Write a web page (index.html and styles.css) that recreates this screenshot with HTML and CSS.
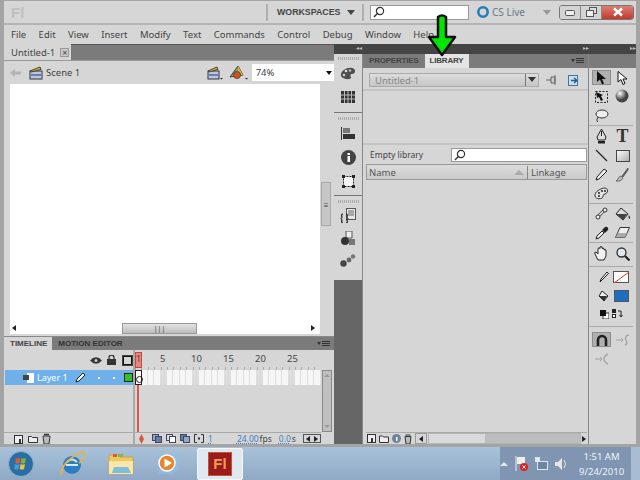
FILE: index.html
```html
<!DOCTYPE html>
<html lang="en">
<head>
  <meta charset="UTF-8">
  <title>Adobe Flash Professional</title>
  <link rel="stylesheet" href="styles.css">
</head>
<body>
  <div class="window">
    <div class="titlebar">
      <span class="logo">Fl</span>
      <span class="title-sep"></span>
      <span class="workspaces">WORKSPACES</span>
      <span class="caret"></span>
      <span class="title-sep"></span>
      <div class="search top-search">
        <svg width="12" height="12" viewBox="0 0 12 12"><circle cx="7" cy="5" r="3.6" fill="none" stroke="#333" stroke-width="1.2"/><path d="M4.3 7.6 1 11" stroke="#333" stroke-width="1.4"/></svg>
      </div>
      <svg class="cs-icon" width="14" height="14" viewBox="0 0 14 14"><circle cx="7" cy="7" r="4.7" fill="none" stroke="#1f7fb8" stroke-width="2.6"/></svg>
      <span class="cs-live">CS Live</span>
      <span class="caret light"></span>
      <div class="win-btns">
        <span class="win-btn"><svg width="10" height="7" viewBox="0 0 10 7"><rect x=".5" y="1.5" width="9" height="5" rx="1" fill="#eee" stroke="#555"/></svg></span>
        <span class="win-btn"><svg width="11" height="10" viewBox="0 0 11 10"><rect x="3.5" y=".5" width="7" height="6" fill="#ddd" stroke="#555"/><rect x=".5" y="3.5" width="7" height="6" fill="#eee" stroke="#555"/></svg></span>
        <span class="win-btn close"><svg width="12" height="10" viewBox="0 0 12 10"><path d="M2 1.5 10 8.5M10 1.5 2 8.5" stroke="#fff" stroke-width="2.4"/></svg></span>
      </div>
    </div>

    <div class="menubar">
      <span>File</span><span>Edit</span><span>View</span><span>Insert</span><span>Modify</span><span>Text</span><span>Commands</span><span>Control</span><span>Debug</span><span>Window</span><span>Help</span>
    </div>

    <div class="workspace">
      <div class="left-col">
        <div class="doc-tabs">
          <div class="doc-tab">Untitled-1 <span class="tab-close">×</span></div>
        </div>
        <div class="scene-bar">
          <svg width="13" height="10" viewBox="0 0 13 10"><path d="M1 5 6 1v2.5h6v3H6V9z" fill="#b4b4b4"/></svg>
          <svg class="clap" width="14" height="14" viewBox="0 0 14 14"><rect x="1" y="5" width="12" height="8" fill="#bcc6dc" stroke="#334"/><rect x="1" y="8" width="12" height="2" fill="#6a7fb0"/><path d="M1 5 11 1l1 2.5L2 6z" fill="#d8b13a" stroke="#443"/></svg>
          <span class="scene-name">Scene 1</span>
          <svg class="clap right" width="16" height="14" viewBox="0 0 16 14"><rect x="1" y="5" width="11" height="8" fill="#bcc6dc" stroke="#334"/><rect x="1" y="8" width="11" height="2" fill="#6a7fb0"/><path d="M1 5 10 1l1 2.5L2 6z" fill="#d8b13a" stroke="#443"/><path d="M13 12h3l-1.5 1.5z" fill="#222"/></svg>
          <svg class="symbol" width="20" height="15" viewBox="0 0 20 15"><path d="M1 12 9 1l5 9z" fill="#6eaa55" stroke="#444"/><path d="M9 1l5 9H9z" fill="#d9b13b"/><circle cx="8" cy="10" r="3.5" fill="#d2521f" stroke="#644"/><path d="M16 13h3l-1.5 1.5z" fill="#222"/></svg>
          <div class="zoom-box">74%<span class="zoom-caret"></span></div>
        </div>
        <div class="stage-area">
          <div class="stage"></div>
          <div class="v-scroll"><span class="v-thumb">≡</span></div>
        </div>
        <div class="h-scroll">
          <span class="arrow-l"></span>
          <span class="h-thumb">|||</span>
          <span class="arrow-r"></span>
        </div>
        <div class="timeline">
          <div class="tl-tabs">
            <span class="tl-tab active">TIMELINE</span>
            <span class="tl-tab">MOTION EDITOR</span>
            <span class="panel-menu"></span>
          </div>
          <div class="tl-main">
            <div class="layers">
              <div class="layer-head">
                <svg class="eye" width="12" height="9" viewBox="0 0 12 9"><path d="M0 4.5Q6-2 12 4.5 6 11 0 4.5z" fill="#333"/><circle cx="6" cy="4.5" r="1.5" fill="#ccc"/></svg>
                <svg width="9" height="10" viewBox="0 0 9 10"><rect y="4" width="9" height="6" fill="#333"/><path d="M2 4V2.500a2.500 2.500 0 0 1 5 0V4" fill="none" stroke="#333" stroke-width="1.3"/></svg>
                <span class="outline-box"></span>
              </div>
              <div class="layer-row">
                <svg class="layer-icon" width="11" height="10" viewBox="0 0 11 10"><path d="M0 2h4V0h7v10H4V7H0z" fill="#fff"/><path d="M0 2h6v5H0z" fill="#444"/></svg>
                <span class="layer-name">Layer 1</span>
                <svg class="pencil" width="11" height="11" viewBox="0 0 11 11"><path d="M1 10l1-3 6-6 2 2-6 6z" fill="#fff" stroke="#222"/></svg>
                <i class="dot"></i><i class="dot"></i>
                <span class="layer-color"></span>
              </div>
              <div class="layer-empty"></div>
              <div class="tl-tools">
                <svg width="10" height="10" viewBox="0 0 10 10"><rect x=".5" y="1.5" width="8" height="8" fill="#eee" stroke="#333"/><path d="M5 5h2v4H5z" fill="#333"/></svg>
                <svg width="10" height="10" viewBox="0 0 10 10"><path d="M.5 2.500h3l1 1h5v5h-9z" fill="#eee" stroke="#333"/></svg>
                <svg width="9" height="11" viewBox="0 0 9 11"><path d="M1 3h7l-1 8H2z" fill="#bbb" stroke="#333"/><path d="M2 1.5h5" stroke="#333" stroke-width="1.5"/></svg>
              </div>
            </div>
            <div class="frames">
              <div class="ruler">
                <span class="ph-head">1</span>
                <span class="rn n5">5</span><span class="rn n10">10</span><span class="rn n15">15</span><span class="rn n20">20</span><span class="rn n25">25</span>
              </div>
              <div class="frame-row">
                <span class="keyframe"></span>
              </div>
              <div class="frame-empty"></div>
              <div class="frame-status">
                <svg class="fs-first" width="5" height="10" viewBox="0 0 5 10"><path d="M2.5 0 5 5 2.500 10 0 5z" fill="#d8593f"/></svg>
                <svg width="10" height="9" viewBox="0 0 10 9"><rect x=".5" y=".5" width="6" height="6" fill="#8fa9c9" stroke="#446"/><rect x="3.5" y="2.5" width="6" height="6" fill="#667d9c" stroke="#446"/></svg>
                <svg width="10" height="9" viewBox="0 0 10 9"><rect x=".5" y=".5" width="6" height="6" fill="#ddd" stroke="#446"/><rect x="3.5" y="2.5" width="6" height="6" fill="#fff" stroke="#446"/></svg>
                <svg width="10" height="9" viewBox="0 0 10 9"><rect x=".5" y=".5" width="6" height="6" fill="#667d9c" stroke="#446"/><rect x="3.5" y="2.5" width="6" height="6" fill="#8fa9c9" stroke="#446"/></svg>
                <svg width="10" height="9" viewBox="0 0 10 9"><path d="M3 .5H.5v8H3M7 .5h2.500v8H7" fill="none" stroke="#333"/><rect x="4" y="3.5" width="2" height="2" fill="#333"/></svg>
                <span class="link first-num">1</span>
                <span class="link fps">24.00</span><span class="unit">fps</span>
                <span class="link secs">0.0</span><span class="unit">s</span>
                <span class="tl-scroll"><span class="arrow-l"></span><span class="arrow-r"></span></span>
              </div>
            </div>
            <div class="tl-vscroll"><span class="up"></span><span class="down"></span></div>
          </div>
        </div>
      </div>

      <div class="right-side">
        <div class="collapse-bar">
          <span class="chev">◂◂</span><span class="chev c2">▸▸</span><span class="chev c3">▸▸</span>
        </div>
        <div class="dock-row">
          <div class="dock">
            <div class="dock-group">
              <span class="grip"></span>
              <svg width="16" height="14" viewBox="0 0 16 14"><path d="M1 9C0 4 7 0 12 1c5 1 3 6 0 6-2 0-2 2-1 3 1 3-8 3-10-1z" fill="#4d4d4d"/><circle cx="6" cy="4" r="1.3" fill="#ddd"/><circle cx="10" cy="3.5" r="1.3" fill="#bbb"/><circle cx="4" cy="8" r="1.3" fill="#ccc"/></svg>
              <svg width="14" height="12" viewBox="0 0 14 12"><rect width="14" height="12" fill="#333"/><path d="M0 4h14M0 8h14M3.500 0v12M7 0v12M10.500 0v12" stroke="#bbb"/></svg>
            </div>
            <div class="dock-group">
              <span class="grip"></span>
              <svg width="14" height="13" viewBox="0 0 14 13"><path d="M.5 0v13" stroke="#333"/><rect x="2" y="1" width="7" height="5" fill="#777"/><rect x="2" y="7" width="12" height="5" fill="#333"/></svg>
              <svg width="15" height="15" viewBox="0 0 15 15"><circle cx="7.5" cy="7.5" r="7.5" fill="#444"/><rect x="6.5" y="6" width="2.5" height="6" fill="#fff"/><rect x="6.5" y="3" width="2.5" height="2" fill="#fff"/></svg>
              <svg width="13" height="13" viewBox="0 0 13 13"><rect x="1.5" y="1.5" width="10" height="10" fill="#f4f4f4" stroke="#222" stroke-dasharray="2 1"/><path d="M0 0h3v3H0zM10 0h3v3h-3zM0 10h3v3H0zM10 10h3v3h-3z" fill="#222"/></svg>
            </div>
            <div class="dock-group last">
              <span class="grip"></span>
              <svg width="16" height="15" viewBox="0 0 16 15"><rect x="6.5" y=".5" width="9" height="11" fill="#e8e8e8" stroke="#555"/><path d="M8 3h6M8 5h6M8 7h6" stroke="#666"/><path d="M3 6Q1 6 2 9 2 10.500 .5 10.500 2 10.500 2 12q-1 3 1 3M6 6q2 0 1 3 0 1.500 1.500 1.500Q7 10.500 7 12q1 3-1 3" fill="none" stroke="#222" stroke-width="1.2"/></svg>
              <svg width="16" height="15" viewBox="0 0 16 15"><path d="M6 0h6v7H6z" fill="#eee" stroke="#555"/><circle cx="5" cy="10" r="4" fill="#333"/><rect x="9" y="8" width="6" height="6" fill="#777"/></svg>
              <svg width="16" height="13" viewBox="0 0 16 13"><circle cx="3.5" cy="9.5" r="3.2" fill="#444"/><circle cx="9" cy="6" r="2.4" fill="#666"/><circle cx="13" cy="2.5" r="2.2" fill="#777"/></svg>
            </div>
            <div class="dock-foot"></div>
          </div>

          <div class="library">
            <div class="lib-tabs">
              <span class="lib-tab">PROPERTIES</span>
              <span class="lib-tab active">LIBRARY</span>
              <span class="panel-menu"></span>
            </div>
            <div class="lib-head">
              <div class="doc-select">
                <span>Untitled-1</span>
                <span class="select-btn"></span>
              </div>
              <svg class="pin-icon" width="12" height="10" viewBox="0 0 12 10"><path d="M0 5h5M5 2h4v6H5zM9 0v10" stroke="#666" fill="#ccc"/></svg>
              <svg class="new-lib-icon" width="12" height="11" viewBox="0 0 12 11"><rect x=".5" y=".5" width="9" height="10" fill="#cfdce8" stroke="#3f78a6"/><path d="M3 5.500h5M6 3l3 2.500L6 8" stroke="#1f5f96" fill="none" stroke-width="1.3"/></svg>
            </div>
            <div class="lib-preview"></div>
            <div class="lib-search-row">
              <span class="empty-label">Empty library</span>
              <div class="search lib-search">
                <svg width="12" height="12" viewBox="0 0 12 12"><circle cx="7" cy="5" r="3.6" fill="none" stroke="#333" stroke-width="1.2"/><path d="M4.3 7.6 1 11" stroke="#333" stroke-width="1.4"/></svg>
              </div>
            </div>
            <div class="lib-list">
              <div class="lib-cols">
                <span class="col-name">Name</span>
                <span class="sort-tri"></span>
                <span class="col-link">Linkage</span>
              </div>
              <div class="lib-rows"></div>
              <div class="lib-foot">
                <svg width="9" height="9" viewBox="0 0 9 9"><rect x=".5" y=".5" width="8" height="8" fill="#eee" stroke="#333"/><rect x="4" y="4" width="2" height="4" fill="#333"/></svg>
                <svg width="10" height="8" viewBox="0 0 10 8"><path d="M.5 1h3l1 1h5v5.500h-9z" fill="#eee" stroke="#333"/></svg>
                <svg width="9" height="9" viewBox="0 0 9 9"><circle cx="4.5" cy="4.5" r="4.5" fill="#6d84a0"/><rect x="4" y="3" width="1.5" height="4" fill="#fff"/></svg>
                <svg width="8" height="10" viewBox="0 0 8 10"><path d="M1 2.500h6L6 10H2z" fill="#bbb" stroke="#333"/><path d="M1.500 1h5" stroke="#333"/></svg>
                <span class="lib-scroll"><span class="arrow-box"><span class="arrow-l"></span></span><span class="track"><span class="track-thumb"></span></span><span class="arrow-r"></span></span>
              </div>
            </div>
          </div>

          <div class="tools">
            <div class="tools-top"></div>
            <div class="tool-group select-tools">
              <span class="tool on"><svg width="11" height="14" viewBox="0 0 11 14"><path d="M1 0v11l3-2.500 2 5 2-1-2-4.500h4z" fill="#111"/></svg></span>
              <span class="tool"><svg width="11" height="14" viewBox="0 0 11 14"><path d="M1 .5v10.500l3-2.500 2 5 2-1-2-4.500h4z" fill="#fff" stroke="#111"/></svg></span>
              <span class="tool"><svg width="15" height="14" viewBox="0 0 15 14"><rect x="1.5" y="1.5" width="12" height="11" fill="none" stroke="#222" stroke-dasharray="2 1.5"/><path d="M2 2l7 3-2 1 2 4-2 1-2-4-2 1z" fill="#111"/></svg></span>
              <span class="tool"><svg width="15" height="15" viewBox="0 0 15 15"><defs><radialGradient id="ball" cx=".35" cy=".3"><stop offset="0" stop-color="#fff"/><stop offset="1" stop-color="#444"/></radialGradient></defs><circle cx="7" cy="7" r="6.5" fill="url(#ball)"/></svg></span>
              <span class="tool"><svg width="15" height="14" viewBox="0 0 15 14"><ellipse cx="8" cy="5" rx="6" ry="4" fill="#eee" stroke="#333"/><path d="M4 8Q2 11 3.500 13" fill="none" stroke="#333"/></svg></span>
            </div>
            <div class="tool-group draw-tools">
              <span class="tool"><svg width="11" height="15" viewBox="0 0 11 15"><path d="M5.500 0 10 8l-1 3H2L1 8z" fill="#ddd" stroke="#222"/><path d="M5.500 2v5" stroke="#222"/><rect x="2" y="12" width="7" height="2.5" fill="#222"/></svg></span>
              <span class="tool tool-t">T</span>
              <span class="tool"><svg width="13" height="13" viewBox="0 0 13 13"><path d="M1 1l11 11" stroke="#222" stroke-width="1.2"/></svg></span>
              <span class="tool"><svg width="14" height="12" viewBox="0 0 14 12"><defs><linearGradient id="rectfill" x2="1" y2="1"><stop offset="0" stop-color="#fff"/><stop offset="1" stop-color="#aaa"/></linearGradient></defs><rect x=".5" y=".5" width="13" height="11" fill="url(#rectfill)" stroke="#444"/></svg></span>
              <span class="tool"><svg width="13" height="13" viewBox="0 0 13 13"><path d="M1 12l1-3 7-8 3 2-8 8z" fill="#eee" stroke="#222"/></svg></span>
              <span class="tool"><svg width="13" height="14" viewBox="0 0 13 14"><path d="M12 0 6 8l1 1 5-7z" fill="#666" stroke="#333" stroke-width=".6"/><path d="M5 8q-2 0-3 3l-2 2q5 1 7-3z" fill="#bbb" stroke="#333" stroke-width=".6"/></svg></span>
              <span class="tool"><svg width="15" height="13" viewBox="0 0 15 13"><path d="M1 9C0 5 7 1 11 1c4 1 3 5 0 6-2 0-2 2-2 3-1 2-7 3-8-1z" fill="#e4e4e4" stroke="#333"/><circle cx="5" cy="6" r="1.1" fill="#333"/><circle cx="8" cy="4" r="1.1" fill="#333"/><circle cx="11" cy="4" r="1.1" fill="#333"/><circle cx="5" cy="9" r="1.1" fill="#333"/></svg></span>
            </div>
            <div class="tool-group paint-tools">
              <span class="tool"><svg width="14" height="14" viewBox="0 0 14 14"><path d="M3.500 9 9 3.500" stroke="#333" stroke-width="3"/><path d="M3.500 9 9 3.500" stroke="#eee" stroke-width="1.6"/><circle cx="3" cy="10" r="2" fill="#eee" stroke="#333"/><circle cx="10" cy="3" r="2" fill="#eee" stroke="#333"/></svg></span>
              <span class="tool"><svg width="16" height="14" viewBox="0 0 16 14"><path d="M6 1l7 6-5 6-7-6z" fill="#ddd" stroke="#222"/><path d="M1 7h11L8 13z" fill="#444"/><path d="M14 8q2 3 0 4-1-2 0-4z" fill="#222"/></svg></span>
              <span class="tool"><svg width="14" height="14" viewBox="0 0 14 14"><path d="M1 13l1-3 5-5 2 2-5 5z" fill="#eee" stroke="#222"/><path d="M7 4l3-3q2-1 3 1t-1 3l-2 2z" fill="#222"/></svg></span>
              <span class="tool"><svg width="15" height="11" viewBox="0 0 15 11"><path d="M5 .5h9.500L10 10.500H.5z" fill="#eee" stroke="#333"/><path d="M.5 10.500 3 6h9l-2 4.500z" fill="#aaa"/></svg></span>
            </div>
            <div class="tool-group view-tools">
              <span class="tool"><svg width="15" height="15" viewBox="0 0 15 15"><path d="M4 14 1 8q-1-2 1-2l2 2V2.500q1-1.500 2 0V1q1-1 2 0v1.500q1-1 2 0V4q1-1 2 0v6l-2 4z" fill="#f2f2f2" stroke="#222"/></svg></span>
              <span class="tool"><svg width="14" height="14" viewBox="0 0 14 14"><circle cx="5.5" cy="5.5" r="4.5" fill="#dfe6ee" stroke="#333" stroke-width="1.3"/><path d="M9 9l4.500 4.500" stroke="#222" stroke-width="2.2"/></svg></span>
            </div>
            <div class="color-group">
              <div class="color-row">
                <svg width="10" height="12" viewBox="0 0 10 12"><path d="M1 11l1-3 6-7 1.500 1.500L3 9z" fill="#eee" stroke="#222"/></svg>
                <span class="swatch stroke-swatch"><svg width="15" height="11" viewBox="0 0 15 11"><path d="M0 11 15 0" stroke="#d23a2a"/></svg></span>
              </div>
              <div class="color-row">
                <svg width="12" height="12" viewBox="0 0 12 12"><path d="M4 1l6 5-4 5-5-5z" fill="#eee" stroke="#222"/><path d="M1 6h8l-3 5z" fill="#333"/></svg>
                <span class="swatch fill-swatch"></span>
              </div>
              <div class="swap-row">
                <svg width="9" height="9" viewBox="0 0 9 9"><rect x="3" y="3" width="6" height="6" fill="#fff" stroke="#333"/><rect width="6" height="6" fill="#111"/></svg>
                <svg width="11" height="10" viewBox="0 0 11 10"><rect width="4" height="4" fill="#222"/><rect x=".5" y="5.5" width="3" height="3" fill="#fff" stroke="#222"/><path d="M6 2h3v5M7.500 6 9 8l1.500-2" fill="none" stroke="#222"/></svg>
              </div>
            </div>
            <div class="snap-group">
              <span class="tool on"><svg width="12" height="12" viewBox="0 0 12 12"><path d="M2 12V6a4 4 0 0 1 8 0v6" fill="none" stroke="#222" stroke-width="2.6"/></svg></span>
              <span class="tool dim"><svg width="15" height="12" viewBox="0 0 15 12"><path d="M1 6h7M6 4l2 2-2 2" fill="none" stroke="#999"/><path d="M14 1Q9 2 11 6t-1 5" fill="none" stroke="#999" stroke-width="1.4"/></svg></span>
              <span class="tool dim"><svg width="15" height="12" viewBox="0 0 15 12"><path d="M1 6h7M6 4l2 2-2 2" fill="none" stroke="#999"/><path d="M14 1Q10 3 10 6t4 5" fill="none" stroke="#999" stroke-width="1.4"/></svg></span>
            </div>
          </div>
        </div>
      </div>
    </div>
  </div>

  <div class="taskbar">
    <div class="start-orb">
      <svg width="26" height="26" viewBox="0 0 26 26"><circle cx="13" cy="13" r="12.5" fill="#2a6ea4" stroke="#8fb2c9"/><path d="M8 7q3 1 4.500 0l-.8 5q-2 1-4.500 0z" fill="#e0593a"/><path d="M13.500 7q2 1 4.500 0l-1 5q-2 1-4.300 0z" fill="#7db53a"/><path d="M7 13q2 1 4.500 0l-.8 5q-2 1-4.500 0z" fill="#3f9fdc"/><path d="M12.500 13q2 1 4.500 0l-1 5q-2 1-4.300 0z" fill="#edc33c"/></svg>
    </div>
    <svg class="task-app" width="26" height="26" viewBox="0 0 26 26"><circle cx="13" cy="14" r="9" fill="#2b7fc0"/><path d="M7 13h12v2H7z" fill="#d8e8f4"/><path d="M8 11q5-5 10 0" fill="none" stroke="#d8e8f4" stroke-width="2"/><path d="M2 24Q2 14 14 6t11-3q3 4-5 9" fill="none" stroke="#e5b443" stroke-width="1.8"/></svg>
    <svg class="task-app" width="26" height="24" viewBox="0 0 26 24"><path d="M1 3h9l2 2h13v17H1z" fill="#eec95e" stroke="#c9a34a"/><rect x="5" y="2" width="4" height="3" fill="#d95a3c"/><rect x="10" y="2" width="5" height="3" fill="#7cb84a"/><path d="M1 9h24v13H1z" fill="#f8e7a6"/><path d="M6 15h14l3 6H4z" fill="#7fbde0"/></svg>
    <svg class="task-app" width="26" height="24" viewBox="0 0 26 24"><path d="M4 2h20v16l-6 4H4z" fill="#8fbfe2" opacity=".7"/><circle cx="12" cy="11" r="8" fill="#e8862c" stroke="#fff" stroke-width="1.5"/><path d="M9.500 6.500 17 11l-7.500 4.500z" fill="#fff"/></svg>
    <div class="task-active"><span class="fl-icon">Fl</span></div>
    <div class="tray">
      <span class="tray-up"></span>
      <svg width="13" height="15" viewBox="0 0 13 15"><path d="M1 0v15" stroke="#eee"/><path d="M2 1h8v7H2z" fill="#eee"/><circle cx="9" cy="11" r="4" fill="#d22"/><path d="M7.500 9.500l3 3M10.500 9.500l-3 3" stroke="#fff"/></svg>
      <svg width="13" height="14" viewBox="0 0 13 14"><rect x="2.5" y="4.5" width="10" height="8" fill="#6d86a6" stroke="#e2e8ee"/><rect x="0" y="0" width="5" height="5" fill="#e2e8ee"/></svg>
      <svg width="12" height="12" viewBox="0 0 12 12"><path d="M0 4h3l4-4v12L3 8H0z" fill="#e6e6e6"/><path d="M9 2q3 4 0 8" fill="none" stroke="#e6e6e6"/></svg>
      <div class="clock"><span>1:51 AM</span><span>9/24/2010</span></div>
      <span class="show-desktop"></span>
    </div>
  </div>

  <svg class="green-arrow" width="36" height="46" viewBox="0 0 36 46"><path d="M14 5q4-3 8 0v20h9L18 43 5 25h9z" fill="#00e600" stroke="#111" stroke-width="2.5" stroke-linejoin="round"/></svg>
</body>
</html>
```

FILE: styles.css
```css
* {
  box-sizing: border-box;
}
html, body {
  margin: 0;
  padding: 0;
  width: 640px;
  height: 480px;
  overflow: hidden;
}
body {
  position: relative;
  background: #d6d6d6;
  color: #444;
  font-family: "Noto Sans", sans-serif;
  font-size: 9.5px;
  white-space: nowrap;
}
svg {
  display: block;
  flex: none;
}
.window {
  height: 447px;
  background: #d6d6d6;
  border: solid #a4a4a4;
  border-width: 1px 4px 3px;
  display: flex;
  flex-direction: column;
}

/* title bar */
.titlebar {
  height: 24px;
  flex: none;
  display: flex;
  align-items: center;
  border-bottom: 2px solid #b4b4b4;
}
.titlebar > * {
  flex: none;
}
.logo {
  padding-left: 7px;
  width: 262px;
  font: bold 15px "Liberation Sans", sans-serif;
  color: #c0c0c0;
}
.title-sep {
  width: 2px;
  height: 17px;
  background: #b0b0b0;
}
.workspaces {
  margin-left: 9px;
  width: 64px;
  font: bold 8.8px "Liberation Sans", sans-serif;
  color: #444;
}
.caret {
  margin: 0 7px 0 6px;
  border-left: 4px solid transparent;
  border-right: 4px solid transparent;
  border-top: 5px solid #444;
}
.caret.light {
  border-top-color: #999;
  margin-left: 17px;
  margin-right: 8px;
}
.search {
  background: #fff;
  border: 1px solid #9a9a9a;
  display: flex;
  align-items: center;
  padding-left: 2px;
}
.top-search {
  width: 99px;
  height: 15px;
  margin-left: 6px;
}
.cs-icon {
  margin-left: 7px;
}
.cs-live {
  margin-left: 2px;
  width: 34px;
  font: 10px "Noto Sans", sans-serif;
  color: #6b7a86;
}
.win-btns {
  display: flex;
  height: 15px;
  width: 75px;
  border: 1px solid #777;
  border-radius: 3px;
  overflow: hidden;
}
.win-btn {
  width: 21px;
  display: flex;
  align-items: center;
  justify-content: center;
  background: #d4d4d4;
  border-right: 1px solid #888;
}
.win-btn.close {
  flex: 1;
  border-right: 0;
  background: linear-gradient(#d98074, #c4392b);
}

/* menu */
.menubar {
  height: 19px;
  flex: none;
  display: flex;
  align-items: center;
  padding-left: 7px;
  gap: 12.4px;
  font-size: 9.5px;
  color: #444;
}

/* main area */
.workspace {
  flex: 1;
  display: flex;
  min-height: 0;
}
.left-col {
  width: 330px;
  flex: none;
  display: flex;
  flex-direction: column;
}
.doc-tabs {
  height: 16px;
  flex: none;
  background: #7b7b7b;
  border-top: 1px solid #555;
}
.doc-tab {
  width: 67px;
  height: 16px;
  margin-top: -1px;
  background: #d6d6d6;
  padding-left: 7px;
  display: flex;
  align-items: center;
  gap: 5px;
  font-size: 9.5px;
  color: #444;
}
.tab-close {
  width: 9px;
  height: 9px;
  line-height: 7px;
  text-align: center;
  border: 1px solid #999;
  background: #c8c8c8;
  font-size: 9px;
}
.scene-bar {
  height: 24px;
  flex: none;
  display: flex;
  align-items: center;
  padding-left: 5px;
  border-top: 1px solid #999;
}
.clap {
  margin-left: 7px;
}
.scene-name {
  margin-left: 3px;
  width: 37px;
  font-size: 9.5px;
  color: #444;
}
.clap.right {
  margin-left: 124px;
}
.symbol {
  margin-left: 6px;
}
.zoom-box {
  margin-left: 3px;
  width: 83px;
  height: 17px;
  background: #fff;
  padding-left: 4px;
  display: flex;
  align-items: center;
  justify-content: space-between;
  font-size: 9.5px;
  color: #444;
}
.zoom-caret {
  margin-right: 2px;
  border-left: 3px solid transparent;
  border-right: 3px solid transparent;
  border-top: 4px solid #111;
}
.stage-area {
  height: 238px;
  flex: none;
  display: flex;
  padding-left: 6px;
}
.stage {
  width: 310px;
  background: #fff;
}
.v-scroll {
  flex: 1;
  padding: 98px 3px 0 1px;
}
.v-thumb {
  display: block;
  height: 44px;
  line-height: 44px;
  text-align: center;
  background: #c6c6c6;
  border: 1px solid #aaa;
  font-size: 8px;
}
.h-scroll {
  height: 12px;
  flex: none;
  margin-left: 6px;
  width: 310px;
  background: #fff;
  display: flex;
  align-items: center;
  padding: 0 5px 0 2px;
}
.h-thumb {
  margin-left: 106px;
  width: 75px;
  height: 11px;
  line-height: 10px;
  text-align: center;
  background: linear-gradient(#e2e2e2, #bdbdbd);
  border: 1px solid #999;
  font-size: 7px;
}
.arrow-l {
  border-top: 3px solid transparent;
  border-bottom: 3px solid transparent;
  border-right: 4px solid #222;
}
.arrow-r {
  border-top: 3px solid transparent;
  border-bottom: 3px solid transparent;
  border-left: 4px solid #222;
}
.h-scroll .arrow-r {
  margin-left: auto;
}

/* timeline */
.timeline {
  flex: 1;
  display: flex;
  flex-direction: column;
  margin-top: 2px;
  border-top: 1px solid #888;
  min-height: 0;
}
.tl-tabs {
  height: 13px;
  background: #7b7b7b;
  display: flex;
  align-items: stretch;
  position: relative;
  flex: none;
}
.tl-tab {
  font: bold 8px/13px "Liberation Sans", sans-serif;
  padding: 0 6px;
  color: #333;
}
.tl-tab.active {
  background: #d6d6d6;
  color: #444;
  padding-right: 5px;
}
.panel-menu {
  position: absolute;
  right: 4px;
  top: 4px;
  width: 8px;
  height: 5px;
  border-top: 1px solid #333;
  border-bottom: 1px solid #333;
  background: linear-gradient(#333, #333) center / 8px 1px no-repeat;
}
.panel-menu::before {
  content: "";
  position: absolute;
  left: -5px;
  top: 0;
  border-left: 2px solid transparent;
  border-right: 2px solid transparent;
  border-top: 3px solid #333;
}
.tl-main {
  flex: 1;
  display: flex;
  min-height: 0;
}
.layers {
  width: 131px;
  flex: none;
  display: flex;
  flex-direction: column;
  border-right: 2px solid #aaa;
}
.layer-head {
  height: 20px;
  flex: none;
  display: flex;
  align-items: center;
  justify-content: flex-end;
  gap: 7px;
  padding-right: 1px;
}
.eye {
  margin-right: -2px;
}
.outline-box {
  width: 9px;
  height: 9px;
  border: 1px solid #111;
  outline: 1px solid #444;
}
.layer-row {
  height: 15px;
  flex: none;
  margin-left: 1px;
  background: #6db0ea;
  display: flex;
  align-items: center;
  color: #fff;
}
.layer-icon {
  margin-left: 18px;
}
.layer-name {
  margin-left: 3px;
  font-size: 9px;
  width: 34px;
}
.pencil {
  margin-left: 4px;
}
.dot {
  width: 2px;
  height: 2px;
  margin-left: 12px;
  background: #fff;
}
.dot + .dot {
  margin-left: 13px;
}
.layer-color {
  margin-left: 9px;
  width: 9px;
  height: 9px;
  background: #2bc52b;
  border: 1px solid #222;
}
.layer-empty {
  flex: 1;
  background: #d6d6d6;
}
.tl-tools {
  height: 12px;
  flex: none;
  display: flex;
  align-items: center;
  gap: 4px;
  padding-left: 10px;
  border-top: 1px solid #aaa;
}
.frames {
  flex: 1;
  display: flex;
  flex-direction: column;
  min-width: 0;
}
.ruler {
  height: 20px;
  flex: none;
  position: relative;
  font-size: 9.5px;
  color: #444;
  background: repeating-linear-gradient(90deg, #aaa 0 1px, transparent 1px 6.4px) 0 17px / 100% 3px no-repeat;
}
.ph-head {
  position: absolute;
  left: 0;
  top: 2px;
  width: 7px;
  height: 16px;
  background: #e0897c;
  border: 1px solid #c44;
  text-align: center;
  font-size: 8px;
  line-height: 11px;
}
.rn {
  position: absolute;
  top: 2px;
}
.n5 { left: 25px; }
.n10 { left: 56px; }
.n15 { left: 88px; }
.n20 { left: 120px; }
.n25 { left: 152px; }
.frame-row {
  height: 15px;
  flex: none;
  position: relative;
  background:
    repeating-linear-gradient(90deg, transparent 0 25.6px, #dcdcdc 25.6px 32px),
    repeating-linear-gradient(90deg, #f6f6f6 0 5.4px, #dedede 5.4px 6.4px);
}
.keyframe {
  position: absolute;
  left: 0;
  top: 0;
  width: 7px;
  height: 15px;
  background: #fff;
  border: 1px solid #222;
}
.keyframe::after {
  content: "";
  position: absolute;
  left: 0;
  bottom: 1px;
  width: 5px;
  height: 5px;
  border: 1px solid #222;
  border-radius: 50%;
}
.frame-empty {
  flex: 1;
  background: linear-gradient(#d8594a, #d8594a) 2px 0 / 2px 100% no-repeat;
}
.frame-status {
  height: 12px;
  flex: none;
  display: flex;
  align-items: center;
  gap: 4px;
  border-top: 1px solid #aaa;
  font-size: 8.5px;
  padding-left: 4px;
}
.fs-first {
  margin-right: 4px;
}
.link {
  color: #3d7fbf;
  text-decoration: underline dotted;
}
.fps {
  margin-left: 20px;
}
.unit {
  color: #444;
  margin-left: -3px;
}
.secs {
  margin-left: 3px;
}
.tl-scroll {
  margin-left: auto;
  width: 18px;
  height: 9px;
  border: 1px solid #555;
  display: flex;
  align-items: center;
  justify-content: space-around;
  background: #d6d6d6;
}
.tl-vscroll {
  width: 10px;
  flex: none;
  margin: 20px 2px 12px 1px;
  background: #c0c0c0;
  border: 1px solid #888;
  display: flex;
  flex-direction: column;
  justify-content: space-between;
  align-items: center;
  padding: 3px 0;
}
.tl-vscroll .up {
  border-left: 3px solid transparent;
  border-right: 3px solid transparent;
  border-bottom: 3px solid #999;
}
.tl-vscroll .down {
  border-left: 3px solid transparent;
  border-right: 3px solid transparent;
  border-top: 3px solid #999;
}

/* right side */
.right-side {
  flex: 1;
  display: flex;
  flex-direction: column;
  min-width: 0;
}
.collapse-bar {
  height: 10px;
  flex: none;
  background: #444;
  position: relative;
  color: #bbb;
  font-size: 6px;
  line-height: 9px;
}
.chev {
  position: absolute;
  left: 22px;
}
.c2 { left: 249px; }
.c3 { left: 296px; }
.dock-row {
  flex: 1;
  display: flex;
  min-height: 0;
}
.dock {
  width: 29px;
  flex: none;
  display: flex;
  flex-direction: column;
  background: #d6d6d6;
  border-right: 1px solid #888;
}
.dock-group {
  flex: none;
  display: flex;
  flex-direction: column;
  align-items: center;
  gap: 10px;
  padding-top: 4px;
  border-bottom: 1px solid #777;
}
.dock-group:nth-child(1) { height: 59px; padding-top: 3px; }
.dock-group:nth-child(2) { height: 83px; }
.dock-group.last { height: 84px; border-bottom: 0; gap: 8px; }
.grip {
  width: 21px;
  height: 3px;
  background: repeating-linear-gradient(90deg, #aaa 0 1px, transparent 1px 2px);
  margin-bottom: -3px;
}
.dock-foot {
  flex: 1;
  background: #666;
}
.library {
  width: 226px;
  flex: none;
  display: flex;
  flex-direction: column;
  border-right: 1px solid #888;
}
.lib-tabs {
  height: 14px;
  background: #7b7b7b;
  display: flex;
  position: relative;
  flex: none;
}
.lib-tab {
  font: bold 8px/14px "Liberation Sans", sans-serif;
  letter-spacing: -0.2px;
  color: #444;
  padding: 0 6px;
}
.lib-tab.active {
  background: #e4e4e4;
  padding: 0 6px 0 5px;
}
.lib-head {
  height: 23px;
  flex: none;
  display: flex;
  align-items: center;
  padding: 3px 0 0 6px;
  border-bottom: 2px solid #c4c4c4;
}
.doc-select {
  width: 170px;
  height: 14px;
  background: linear-gradient(#dcdcdc, #c6c6c6);
  border: 1px solid #aaa;
  display: flex;
  align-items: center;
  justify-content: space-between;
  padding-left: 5px;
  color: #888;
  font-size: 9.5px;
}
.pin-icon {
  margin-left: 7px;
}
.new-lib-icon {
  margin-left: 10px;
}
.select-btn {
  width: 13px;
  height: 12px;
  border-left: 1px solid #777;
  position: relative;
}
.select-btn::after {
  content: "";
  position: absolute;
  left: 2px;
  top: 3px;
  border-left: 4px solid transparent;
  border-right: 4px solid transparent;
  border-top: 5px solid #333;
}
.lib-preview {
  height: 54px;
  flex: none;
  border-bottom: 2px solid #c4c4c4;
}
.lib-search-row {
  height: 19px;
  flex: none;
  display: flex;
  align-items: center;
  padding-left: 7px;
}
.empty-label {
  width: 81px;
  font-size: 8.5px;
  color: #444;
}
.lib-search {
  width: 136px;
  height: 14px;
}
.lib-list {
  flex: 1;
  display: flex;
  flex-direction: column;
  margin: 0 1px 0 3px;
  min-height: 0;
}
.lib-cols {
  height: 16px;
  flex: none;
  display: flex;
  align-items: center;
  background: linear-gradient(#dcdcdc, #cacaca);
  border: 1px solid #999;
  padding-left: 2px;
  font-size: 9.5px;
  color: #555;
}
.col-name {
  width: 145px;
}
.sort-tri {
  border-left: 5px solid transparent;
  border-right: 5px solid transparent;
  border-bottom: 5px solid #aaa;
  margin-right: 3px;
}
.col-link {
  border-left: 1px solid #888;
  padding-left: 3px;
}
.lib-rows {
  flex: 1;
}
.lib-foot {
  height: 12px;
  flex: none;
  display: flex;
  align-items: center;
  gap: 3px;
  padding-left: 1px;
  border-top: 1px solid #aaa;
}
.lib-scroll {
  flex: 1;
  display: flex;
  align-items: center;
  padding-right: 1px;
  gap: 1px;
}
.arrow-box {
  width: 12px;
  height: 11px;
  border: 1px solid #999;
  display: flex;
  align-items: center;
  justify-content: center;
}
.track {
  flex: 1;
  height: 11px;
  background: #bdbdbd;
  border: 1px solid #b4b4b4;
}
.track-thumb {
  display: block;
  width: 56px;
  height: 100%;
  background: #dadada;
}

/* tools */
.tools {
  flex: 1;
  display: flex;
  flex-direction: column;
  min-width: 0;
}
.tools-top {
  height: 14px;
  flex: none;
  background: #7b7b7b;
}
.tool-group {
  display: grid;
  grid-template-columns: 21px 21px;
  grid-auto-rows: 19px;
  padding-left: 2px;
  margin-right: 3px;
  border-bottom: 1px solid #aaa;
}
.select-tools { height: 58px; }
.draw-tools { padding-top: 1px; height: 78px; }
.paint-tools { height: 39px; }
.view-tools { padding: 1px 0 3px 2px; height: 24px; }
.tool {
  display: flex;
  align-items: center;
  justify-content: center;
}
.tool.on {
  background: #b0b0b0;
  box-shadow: inset 0 0 0 1px #8e8e8e;
  margin: 2px 1px;
}
.tool-t {
  font: bold 18px "Liberation Serif", serif;
  color: #333;
}
.color-group {
  height: 60px;
  flex: none;
  padding-left: 9px;
  margin-right: 3px;
  border-bottom: 1px solid #aaa;
}
.color-row {
  display: flex;
  align-items: center;
  justify-content: flex-end;
  gap: 4px;
  height: 19px;
  padding-right: 4px;
}
.swatch {
  width: 16px;
  height: 12px;
  display: block;
  border: 1px solid #555;
}
.stroke-swatch {
  background: #fff;
}
.fill-swatch {
  background: #1b6fc0;
}
.swap-row {
  display: flex;
  justify-content: center;
  align-items: center;
  gap: 3px;
  height: 18px;
  margin-right: 8px;
}
.snap-group {
  display: grid;
  grid-template-columns: 21px 21px;
  grid-auto-rows: 19px;
  padding: 3px 0 0 2px;
}
.tool.dim svg {
  opacity: 0.8;
}

/* windows taskbar */
.taskbar {
  height: 33px;
  display: flex;
  align-items: center;
  background: linear-gradient(#a9c2da, #8fa9c6);
  position: relative;
}
.start-orb {
  margin-left: 8px;
  width: 26px;
}
.taskbar .task-app:nth-child(2) { margin-left: 25px; }
.taskbar .task-app:nth-child(3) { margin-left: 23px; }
.taskbar .task-app:nth-child(4) { margin-left: 21px; }
.task-active {
  margin-left: 16px;
  width: 46px;
  height: 32px;
  background: #e0e8f0;
  border: 1px solid #f4f6f8;
  border-radius: 2px;
  display: flex;
  align-items: center;
  justify-content: center;
}
.fl-icon {
  width: 24px;
  height: 24px;
  text-align: center;
  background: #9c1a1d;
  border: 1px solid #bb5a2a;
  color: #e8a050;
  font: bold 15px/22px "Liberation Sans", sans-serif;
}
.tray {
  margin-left: auto;
  height: 33px;
  display: flex;
  align-items: center;
  gap: 7px;
  background: #7f95b1;
  color: #fff;
  width: 140px;
}
.tray-up {
  width: 0;
  height: 0;
  border-left: 4px solid transparent;
  border-right: 4px solid transparent;
  border-bottom: 4px solid #e8e8e8;
}
.clock {
  margin-left: 5px;
  display: flex;
  flex-direction: column;
  align-items: center;
  font: 9.5px/15px "Noto Sans", sans-serif;
  color: #f0f4f8;
}
.show-desktop {
  margin-left: auto;
  width: 10px;
  height: 33px;
  background: #a9bdd2;
}

/* annotation drawn on top of the screenshot */
.green-arrow {
  position: absolute;
  left: 424px;
  top: 12px;
}
```
